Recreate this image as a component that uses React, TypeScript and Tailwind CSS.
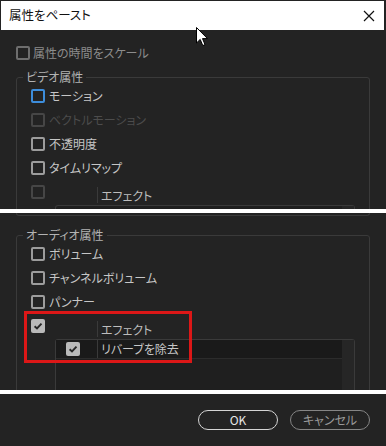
import React from "react";

type BoxKind = "normal" | "focus" | "disabled" | "dim" | "checked";

const boxStyles: Record<BoxKind, string> = {
  normal: "border-2 border-[#9c9c9c]",
  focus: "border-2 border-[#3d8ddb]",
  disabled: "border-2 border-[#464646]",
  dim: "border-2 border-[#6e6e6e]",
  checked: "bg-[#b9b9b9]",
};

const Box: React.FC<{ kind?: BoxKind }> = ({ kind = "normal" }) => (
  <span className={`flex h-[14px] w-[14px] shrink-0 items-center justify-center rounded-[2px] ${boxStyles[kind]}`}>
    {kind === "checked" && (
      <svg width="10" height="10" viewBox="0 0 10 10">
        <path d="M1.6 5.2 L4 7.5 L8.5 2.6" fill="none" stroke="#262626" strokeWidth="1.9" />
      </svg>
    )}
  </span>
);

const Row: React.FC<{ label: string; kind?: BoxKind; textClass?: string }> = ({
  label,
  kind = "normal",
  textClass = "text-[#c6c6c6]",
}) => (
  <div className="flex h-[24px] items-center gap-[4px] pl-[14px]">
    <Box kind={kind} />
    <span className={textClass}>{label}</span>
  </div>
);

const Legend: React.FC<{ text: string }> = ({ text }) => (
  <legend className="ml-[6px] px-[3px] leading-[14px] text-[#b3b3b3]">{text}</legend>
);

const EffectBlock: React.FC<{ kind: BoxKind; children?: React.ReactNode }> = ({ kind, children }) => (
  <div className="flex items-start pl-[14px] pr-[14px] pt-[5px]">
    <Box kind={kind} />
    <div className="ml-[10px] flex-1">
      <div className="flex h-[20px]">
        <div className="w-[42px]" />
        <div className="my-[2px] border-l border-[#3a3a3a] pl-[3px] leading-[18px] text-[#bdbdbd]">エフェクト</div>
      </div>
      <div className="flex h-[60px] rounded-t-[3px] border border-b-0 border-[#3a3a3a] bg-[#1f1f1f]">
        <div className="flex-1">{children}</div>
        <div className="w-[12px] bg-[#262626]" />
      </div>
    </div>
  </div>
);

const Cursor = () => (
  <svg className="absolute left-[196px] top-[27px]" width="13" height="20" viewBox="0 0 13 20">
    <path d="M0.5 0.5 L0.5 16 L4.2 12.4 L6.8 18.6 L9 17.6 L6.5 11.6 L11.5 11.6 Z" fill="#fff" stroke="#000" strokeWidth="1" strokeLinejoin="round" />
  </svg>
);

export default function App() {
  return (
    <div
      className="relative flex h-[446px] w-[386px] flex-col gap-[4px] overflow-hidden bg-white text-[12px] [font-family:'Noto_Sans_CJK_JP',sans-serif] [font-feature-settings:'palt']"
    >
      {/* slice 1 */}
      <div className="h-[209px] shrink-0 overflow-hidden bg-[#232323]">
        <div className="ml-[1px] mr-[2px] mt-[1px] flex h-[29px] items-center justify-between bg-white pl-[8px] pr-[9px]">
          <span className="text-[12.5px] text-[#111]">属性をペースト</span>
          <svg width="12" height="12" viewBox="0 0 12 12">
            <path d="M1 1 L11 11 M11 1 L1 11" stroke="#111" strokeWidth="1.2" />
          </svg>
        </div>
        <div className="mt-[11px] flex h-[24px] items-center gap-[3px] pl-[16px]">
          <Box kind="dim" />
          <span className="text-[#8c8c8c]">属性の時間をスケール</span>
        </div>
        <fieldset className="mx-[16px] mt-[5px] rounded-[3px] border border-[#3a3a3a]">
          <Legend text="ビデオ属性" />
          <Row label="モーション" kind="focus" />
          <Row label="ベクトルモーション" kind="disabled" textClass="text-[#4c4c4c]" />
          <Row label="不透明度" />
          <Row label="タイムリマップ" />
          <EffectBlock kind="disabled" />
        </fieldset>
      </div>

      {/* slice 2 */}
      <div className="relative h-[177px] shrink-0 overflow-hidden bg-[#232323]">
        <div className="mx-[16px] h-[3px] rounded-b-[3px] border-x border-b border-[#3a3a3a]" />
        <fieldset className="mx-[16px] mt-[12px] rounded-[3px] border border-[#3a3a3a]">
          <Legend text="オーディオ属性" />
          <Row label="ボリューム" />
          <Row label="チャンネルボリューム" />
          <Row label="パンナー" />
          <EffectBlock kind="checked">
            <div className="flex h-[19px] items-center border-b border-[#2c2c2c] bg-[#1a1a1a]">
              <div className="w-[41px] pl-[10px]">
                <Box kind="checked" />
              </div>
              <div className="flex h-full items-center border-l border-[#3a3a3a] pl-[3px] text-[#c6c6c6]">
                リバーブを除去
              </div>
            </div>
          </EffectBlock>
        </fieldset>
        <div className="absolute left-[24px] top-[98px] h-[52px] w-[168px] border-[3px] border-[#dc1717]" />
      </div>

      {/* slice 3 */}
      <div className="flex h-[52px] shrink-0 justify-end gap-[12px] bg-[#232323] pr-[16px] pt-[16px]">
        <button className="flex h-[20px] w-[80px] items-center justify-center rounded-full border-[1.5px] border-[#d4d4d4] text-[#e6e6e6]">
          OK
        </button>
        <button className="flex h-[20px] w-[80px] items-center justify-center rounded-full border-[1.5px] border-[#858585] text-[#9a9a9a]">
          キャンセル
        </button>
      </div>

      <Cursor />
    </div>
  );
}
